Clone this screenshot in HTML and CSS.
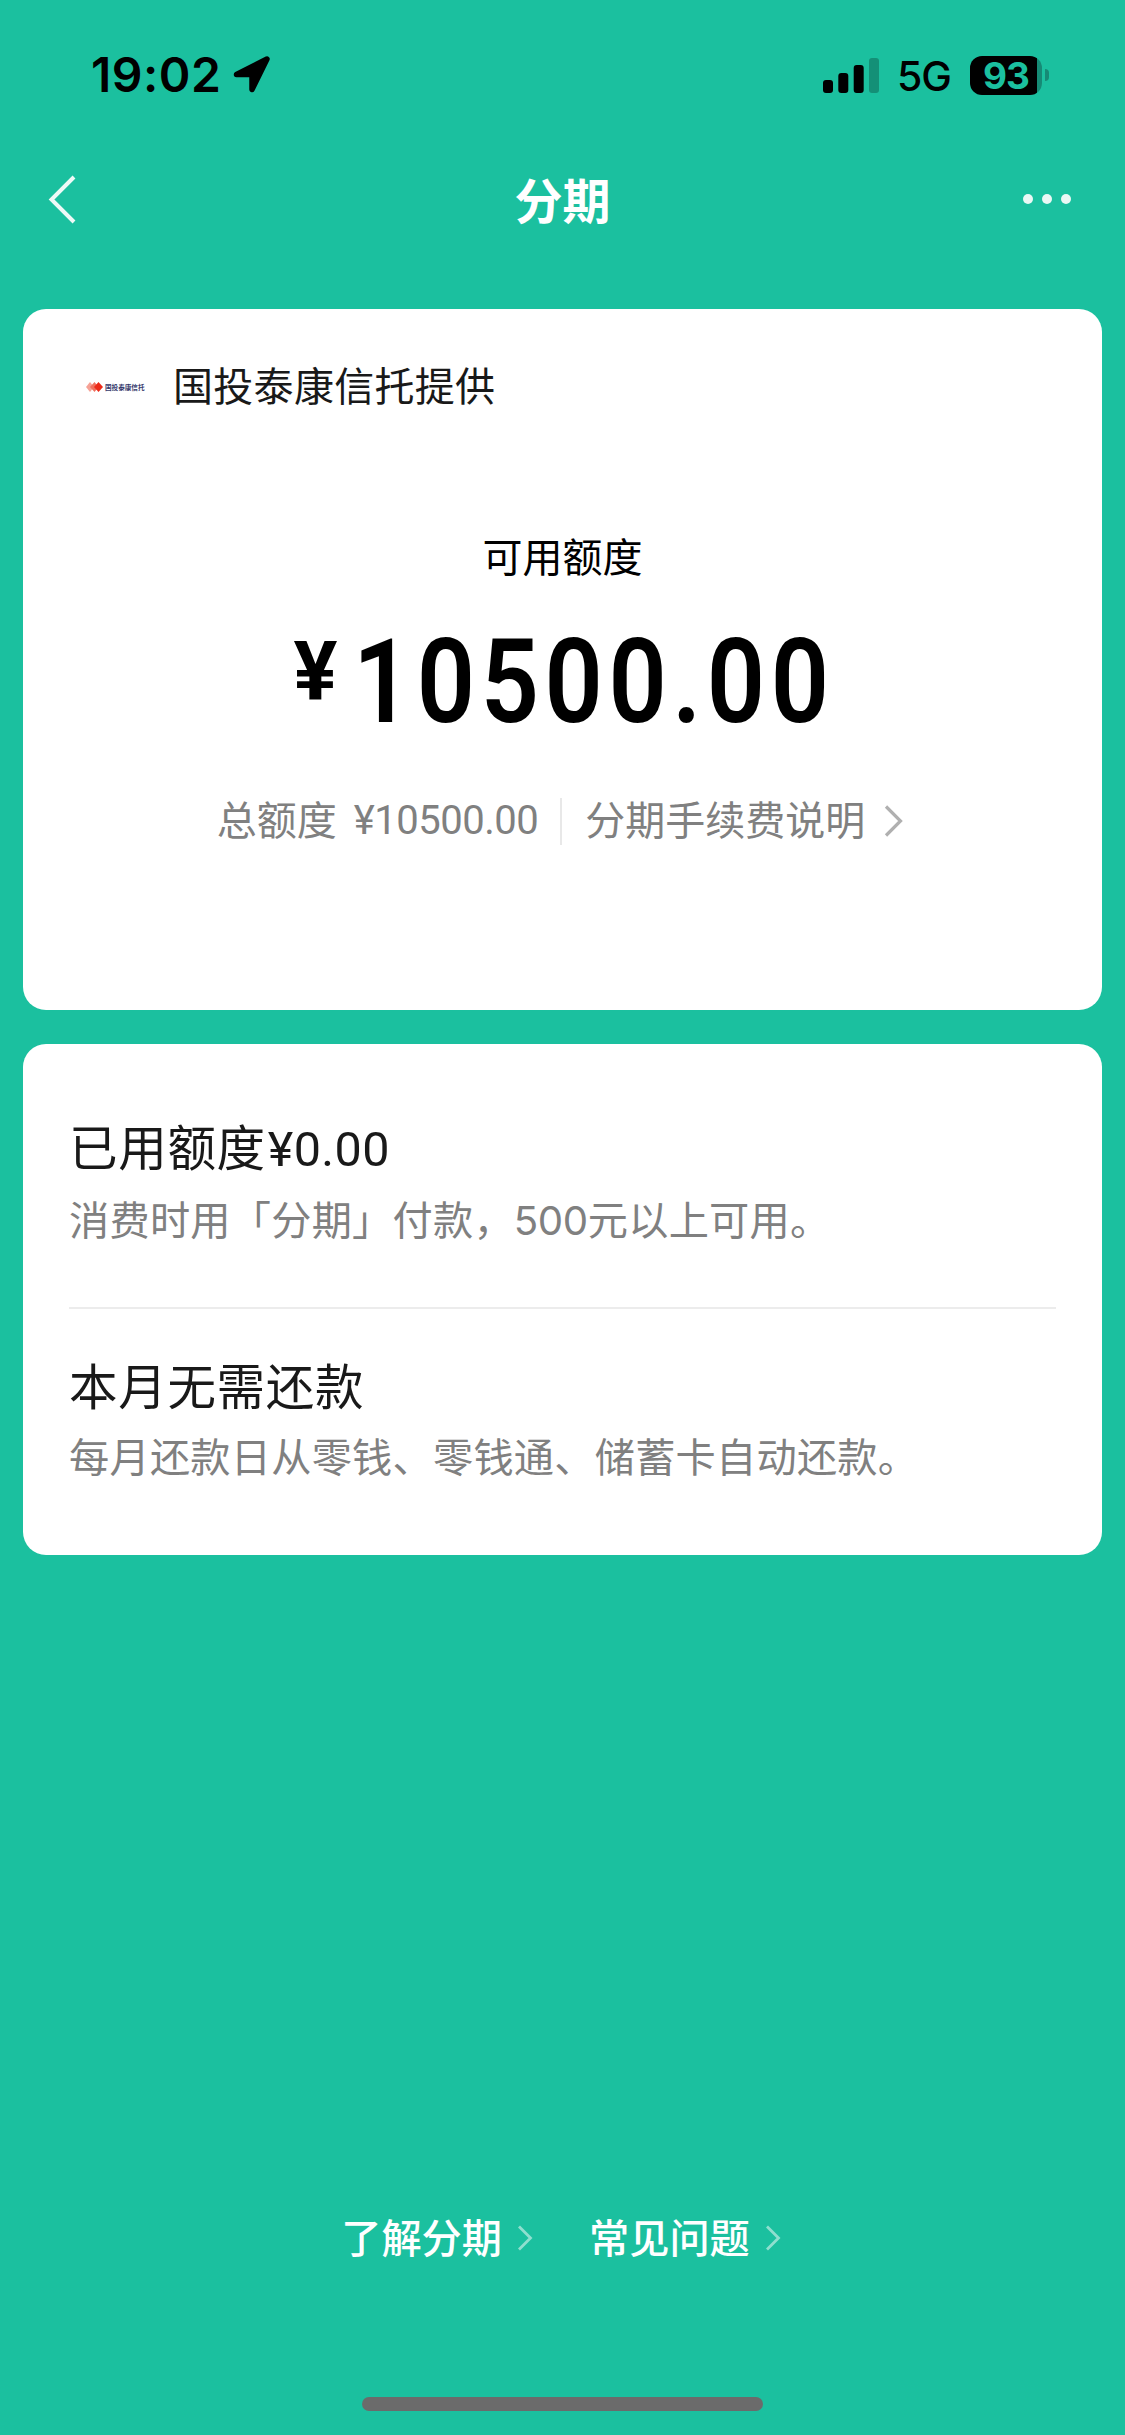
FILE: index.html
```html
<!DOCTYPE html>
<html lang="zh-CN">
<head>
<meta charset="utf-8">
<title>分期</title>
<link rel="stylesheet" href="styles.css">
</head>
<body>
<div class="screen">
  <header class="status">
    <div class="clock">
      <span class="time">19:02</span>
      <svg class="location" width="40" height="40" viewBox="0 0 40 40"><path d="M35 4 20 34.500V19.500H4.500Z" fill="#000" stroke="#000" stroke-width="5.500" stroke-linejoin="round"/></svg>
    </div>
    <div class="signals">
      <svg class="bars" width="56" height="35" viewBox="0 0 56 35"><rect x="0" y="22" width="10" height="13" rx="3"/><rect x="15.300" y="15" width="10" height="20" rx="3"/><rect x="30.700" y="7" width="10" height="28" rx="3"/><rect x="46" y="0" width="10" height="35" rx="3" opacity=".25"/></svg>
      <span class="network">5G</span>
      <div class="battery"><span class="level">93</span></div>
      <i class="battery-cap"></i>
    </div>
  </header>
  <nav class="nav">
    <svg class="back" width="30" height="52" viewBox="0 0 30 52"><path d="M26 4 3.500 26.500 26 49" fill="none" stroke="#eefaf7" stroke-width="4"/></svg>
    <h1 class="title">分期</h1>
    <div class="more"><i></i><i></i><i></i></div>
  </nav>
  <main class="cards">
    <section class="card limit">
      <div class="provider">
        <div class="logo">
          <svg width="17" height="10" viewBox="0 0 17 10"><path d="M0 5 4 0 8 5 4 10Z" fill="#f6a296"/><path d="M4 5 8.500 0 12.500 5 8.500 10Z" fill="#f0705e"/><path d="M8 5 12.500 0 17 5 12.500 10Z" fill="#ec2a18"/></svg>
          <span>国投泰康信托</span>
        </div>
        <p class="provider-name">国投泰康信托提供</p>
      </div>
      <p class="limit-label">可用额度</p>
      <p class="amount"><span class="yen">¥</span><span class="digits">10500.00</span></p>
      <div class="details">
        <span>总额度</span><span class="total">¥10500.00</span>
        <i class="rule"></i>
        <span class="fee">分期手续费说明</span>
        <svg class="arrow" width="20" height="34" viewBox="0 0 20 34"><path d="M2 2.500 16.500 17 2 31.500" fill="none" stroke="#b0b0b0" stroke-width="3.200"/></svg>
      </div>
    </section>
    <section class="card usage">
      <div class="item">
        <h2>已用额度<span class="num">¥0.00</span></h2>
        <p>消费时用「分期」付款，<span class="plain">500</span>元以上可用。</p>
      </div>
      <div class="item second">
        <h2>本月无需还款</h2>
        <p>每月还款日从零钱、零钱通、储蓄卡自动还款。</p>
      </div>
    </section>
  </main>
  <footer class="footer">
    <div class="links">
      <a>了解分期<svg width="16" height="26" viewBox="0 0 16 26"><path d="M2 1.500 13.500 13 2 24.500" fill="none" stroke="#8fdfcf" stroke-width="2.800"/></svg></a>
      <a>常见问题<svg width="16" height="26" viewBox="0 0 16 26"><path d="M2 1.500 13.500 13 2 24.500" fill="none" stroke="#8fdfcf" stroke-width="2.800"/></svg></a>
    </div>
    <div class="home-bar"></div>
  </footer>
</div>
</body>
</html>
```
FILE: styles.css
```css
* { box-sizing: border-box; margin: 0; padding: 0; }
body {
  background: #1bc09f;
  color: #000;
  font-family: "Noto Sans CJK SC", sans-serif;
  font-weight: 400;
}
svg, i { display: block; flex: none; }
.screen {
  width: 1125px;
  height: 2435px;
  display: flex;
  flex-direction: column;
  overflow: hidden;
}

/* status bar */
.status {
  height: 132px;
  padding: 0 76px 0 91px;
  display: flex;
  justify-content: space-between;
  font-family: Inter, sans-serif;
}
.clock, .signals { display: flex; align-items: center; height: 116px; padding-top: 34px; }
.time { font-size: 48px; line-height: 116px; font-weight: 600; width: 141px; white-space: nowrap; letter-spacing: .5px; }
.bars { margin-right: 18px; }
.network { font-size: 41px; font-weight: 450; width: 73px; letter-spacing: -1px; padding-top: 2px; }
.battery {
  width: 72px;
  height: 39px;
  border-radius: 12px;
  background: linear-gradient(90deg, #000 67px, #168a75 67px);
  display: flex;
  justify-content: center;
}
.level { color: #1bc09f; font-size: 37px; line-height: 39px; font-weight: 700; letter-spacing: -1px; }
.battery-cap {
  width: 4px;
  height: 12px;
  margin-left: 3px;
  border-radius: 0 4px 4px 0;
  background: #168a75;
}

/* navigation */
.nav {
  height: 177px;
  padding: 31px 48px 0;
  display: grid;
  grid-template-columns: 1fr auto 1fr;
  align-items: start;
}
.back { margin-top: 10px; }
.title { color: #fff; font-size: 48px; line-height: 70px; font-weight: 700; }
.more { display: flex; gap: 9px; justify-content: flex-end; padding: 31px 6px 0 0; }
.more i { width: 10px; height: 10px; border-radius: 5px; background: #eaf8f5; }

/* cards */
.cards { padding: 0 23px; display: flex; flex-direction: column; gap: 34px; }
.card { background: #fff; border-radius: 23px; }
.limit {
  height: 701px;
  padding-top: 45px;
  display: flex;
  flex-direction: column;
  align-items: center;
}
.provider { align-self: stretch; display: flex; align-items: center; padding-left: 63px; height: 60px; }
.logo { display: flex; align-items: center; gap: 2px; width: 87px; padding-top: 6px; }
.logo span { color: #35386b; font-size: 6.600px; line-height: 10px; font-weight: 700; white-space: nowrap; }
.provider-name { color: #191919; font-size: 40px; line-height: 60px; letter-spacing: .3px; }
.limit-label { font-size: 40px; line-height: 60px; margin-top: 111px; }
.amount {
  height: 140px;
  margin: 25px 0 0 6px;
  display: flex;
  font-family: Roboto, sans-serif;
}
.yen { width: 59px; font-size: 82px; line-height: 122px; font-weight: 700; }
.digits {
  width: 485px;
  font-size: 116px;
  line-height: 144px;
  font-weight: 600;
  letter-spacing: 6.300px;
  white-space: nowrap;
  transform: scaleX(.88);
  transform-origin: 0 50%;
}
.details {
  display: flex;
  align-items: center;
  height: 60px;
  margin: 38px 4px 0 0;
  color: #808080;
  font-size: 40px;
  line-height: 60px;
}
.total { font-family: Roboto, sans-serif; margin-left: 17px; padding-top: 5px; letter-spacing: -.5px; }
.rule { width: 2px; height: 47px; background: #e8e8e8; margin: 6px 23px 0 22px; }
.fee { margin-right: 19px; }
.arrow { margin-top: 6px; }
.usage { height: 511px; padding: 66px 46px 0; }
.item { height: 199px; border-bottom: 2px solid #ececec; }
.item h2 { color: #191919; font-size: 48.500px; line-height: 70px; font-weight: 400; height: 70px; letter-spacing: .7px; }
.item p { color: #808080; font-size: 40.200px; line-height: 60px; margin-top: 8px; height: 60px; white-space: nowrap; letter-spacing: .25px; }
.item .num { font-family: Roboto, sans-serif; line-height: 1; letter-spacing: .4px; margin-left: 2px; }
.item .plain { font-family: Inter, sans-serif; line-height: 1; font-weight: 400; letter-spacing: -.4px; }
.item.second { padding-top: 40px; border: 0; }
.item.second p { margin-top: 6px; }

/* footer */
.footer { margin-top: auto; height: 229px; display: flex; flex-direction: column; align-items: center; }
.links { display: flex; gap: 56px; margin-left: -3px; }
.links a { display: flex; align-items: center; gap: 15px; color: #fff; font-size: 40.200px; line-height: 60px; font-weight: 500; }
.links svg { margin-top: 4px; }
.home-bar { width: 401px; height: 14px; border-radius: 7px; background: #6b6b6b; margin-top: 131px; }
```
